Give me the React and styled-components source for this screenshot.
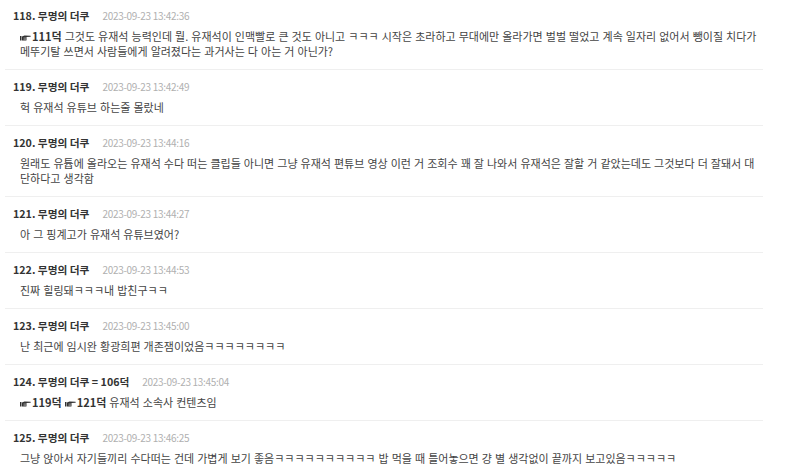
import React from "react";
import styled, { createGlobalStyle } from "styled-components";

const Global = createGlobalStyle`
  html, body { margin: 0; padding: 0; background: #fff; }
  body {
    font-family: "Noto Sans CJK KR", "Noto Sans", sans-serif;
    color: #333;
    -webkit-font-smoothing: antialiased;
  }
`;

const List = styled.ul`
  list-style: none;
  margin: -1px 0 0 5px;
  padding: 0;
  width: 758px;
`;

const Item = styled.li`
  padding: 8px 0 10px;
  border-bottom: 1px solid #efefef;
  &:last-child { border-bottom: none; }
`;

const Header = styled.div`
  display: flex;
  align-items: center;
  gap: 13px;
  height: 16px;
  padding-left: 8px;
`;

const Author = styled.span`
  font-size: 10.7px;
  font-weight: 700;
  color: #333;
  white-space: nowrap;
`;

const Stamp = styled.span`
  font-size: 10px;
  letter-spacing: -0.3px;
  color: #b0b0b0;
  white-space: nowrap;
`;

const Body = styled.p`
  margin: 6px 0 0;
  padding: 0 0 0 15px;
  font-size: 11px;
  line-height: 15px;
  word-spacing: 0.6px;
  color: #444;
  white-space: pre;
`;

const Anchor = styled.b`
  font-weight: 700;
  color: #333;
  word-spacing: 0;
`;

const HandIcon = styled.svg`
  width: 11px;
  height: 7px;
  margin-right: 1px;
  vertical-align: 0px;
`;

/* right-pointing hand drawn in front of a quoted comment number */
const Hand = () => (
  <HandIcon viewBox="0 0 22 14" aria-hidden="true">
    <rect x="0" y="4" width="3" height="9" fill="#333" />
    <path d="M4 5 L9 3 L21 3.5 Q22 4.5 21 5.5 L13 6 L13 12 Q13 13 12 13 L4 13 Z" fill="#333" />
    <path d="M7 8 L12 8 M7 10.5 L12 10.5" stroke="#fff" strokeWidth="0.9" />
  </HandIcon>
);

const comments = [
  {
    no: 118,
    who: "무명의 더쿠",
    at: "2023-09-23 13:42:36",
    refs: ["111덕"],
    text:
      "그것도 유재석 능력인데 뭘. 유재석이 인맥빨로 큰 것도 아니고 ㅋㅋㅋ 시작은 초라하고 무대에만 올라가면 벌벌 떨었고 계속 일자리 없어서 뺑이질 치다가\n메뚜기탈 쓰면서 사람들에게 알려졌다는 과거사는 다 아는 거 아닌가?",
  },
  { no: 119, who: "무명의 더쿠", at: "2023-09-23 13:42:49", text: "헉 유재석 유튜브 하는줄 몰랐네" },
  {
    no: 120,
    who: "무명의 더쿠",
    at: "2023-09-23 13:44:16",
    text:
      "원래도 유튭에 올라오는 유재석 수다 떠는 클립들 아니면 그냥 유재석 편튜브 영상 이런 거 조회수 꽤 잘 나와서 유재석은 잘할 거 같았는데도 그것보다 더 잘돼서 대\n단하다고 생각함",
  },
  { no: 121, who: "무명의 더쿠", at: "2023-09-23 13:44:27", text: "아 그 핑계고가 유재석 유튜브였어?" },
  { no: 122, who: "무명의 더쿠", at: "2023-09-23 13:44:53", text: "진짜 힐링돼ㅋㅋㅋ내 밥친구ㅋㅋ" },
  { no: 123, who: "무명의 더쿠", at: "2023-09-23 13:45:00", text: "난 최근에 임시완 황광희편 개존잼이었음ㅋㅋㅋㅋㅋㅋㅋㅋ" },
  {
    no: 124,
    who: "무명의 더쿠 = 106덕",
    at: "2023-09-23 13:45:04",
    refs: ["119덕", "121덕"],
    text: "유재석 소속사 컨텐츠임",
  },
  {
    no: 125,
    who: "무명의 더쿠",
    at: "2023-09-23 13:46:25",
    text:
      "그냥 앉아서 자기들끼리 수다떠는 건데 가볍게 보기 좋음ㅋㅋㅋㅋㅋㅋㅋㅋㅋㅋ 밥 먹을 때 틀어놓으면 걍 별 생각없이 끝까지 보고있음ㅋㅋㅋㅋㅋ",
  },
];

export default function App() {
  return (
    <>
      <Global />
      <List>
        {comments.map((c) => (
          <Item key={c.no}>
            <Header>
              <Author>
                {c.no}. {c.who}
              </Author>
              <Stamp>{c.at}</Stamp>
            </Header>
            <Body>
              {(c.refs || []).map((r) => (
                <React.Fragment key={r}>
                  <Anchor>
                    <Hand />
                    {r}
                  </Anchor>{" "}
                </React.Fragment>
              ))}
              {c.text}
            </Body>
          </Item>
        ))}
      </List>
    </>
  );
}
